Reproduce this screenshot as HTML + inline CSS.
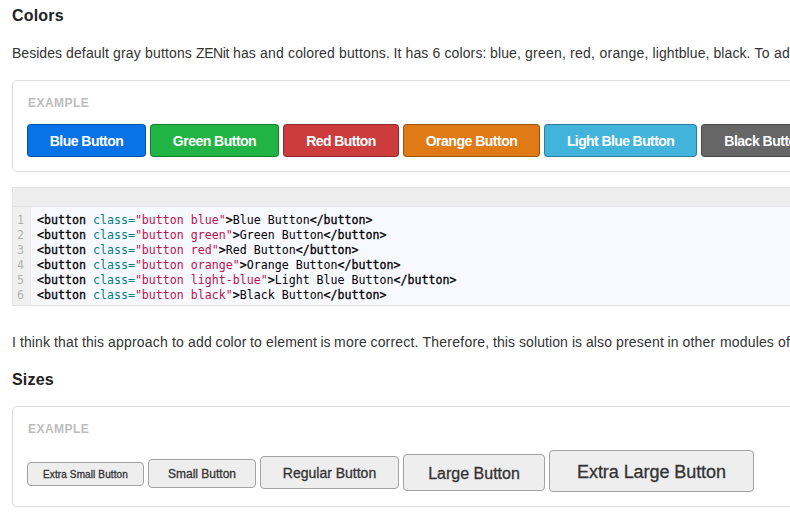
<!DOCTYPE html>
<html><head><meta charset="utf-8">
<style>
html,body{margin:0;padding:0;background:#fff;}
body{width:790px;height:513px;overflow:hidden;position:relative;font-family:"Liberation Sans",sans-serif;color:#333;font-size:14px;}
h2{position:absolute;margin:0;font-size:16px;font-weight:bold;color:#222;left:12px;white-space:nowrap;line-height:20px;letter-spacing:0.2px;}
p{position:absolute;margin:0;left:0;top:0;width:790px;height:20px;white-space:nowrap;font-size:14px;line-height:20px;color:#333;}
p span{position:absolute;top:0;white-space:nowrap;}
.box{position:absolute;left:12px;width:900px;border:1px solid #ddd;border-radius:5px;background:#fff;box-sizing:border-box;}
.ex{position:absolute;left:15px;font-size:12px;font-weight:bold;color:#bdbdbd;letter-spacing:0.45px;line-height:14px;}
.btn{position:absolute;box-sizing:border-box;border-radius:4px;color:#fff;font-weight:bold;font-size:14px;text-align:center;border:1px solid rgba(0,0,0,.3);white-space:nowrap;}
.g{background:#eee;border:1px solid #a2a2a2;color:#333;font-weight:normal;-webkit-text-stroke:0.3px #333;}
.code{position:absolute;left:12px;top:187px;width:900px;height:119px;background:#f8f8ff;border:1px solid #e3e3e3;box-sizing:border-box;}
.code .bar{position:absolute;left:0;top:0;right:0;height:18px;background:#eee;border-bottom:1px solid #e3e3e3;}
.code .gut{position:absolute;left:0;top:19px;width:17px;bottom:0;background:#f0f0f0;border-right:1px solid #e8e8e8;}
.ln{position:absolute;left:12px;width:12px;text-align:right;font-family:"DejaVu Sans Mono","Liberation Mono",monospace;font-size:11.627px;color:#b0b0b0;line-height:15px;}
.cl{position:absolute;left:37px;font-family:"DejaVu Sans Mono","Liberation Mono",monospace;font-size:11.627px;line-height:15px;color:#000;white-space:pre;}
.cl b{font-weight:normal;color:#000;-webkit-text-stroke:0.3px #000;}
.cl .a{color:#008080;}
.cl .s{color:#b8144c;}
</style></head><body>
<h2 style="top:6px">Colors</h2>
<p style="top:43px"><span style="left:12px;letter-spacing:0.028px">Besides </span><span style="left:66px;letter-spacing:0.138px">default </span><span style="left:113px;letter-spacing:0.191px">gray </span><span style="left:145px;letter-spacing:0.154px">buttons </span><span style="left:196px;letter-spacing:-0.400px">ZENit </span><span style="left:233px;letter-spacing:0.143px">has </span><span style="left:260px;letter-spacing:0.214px">and </span><span style="left:288px;letter-spacing:0.155px">colored </span><span style="left:339px;letter-spacing:0.148px">buttons. </span><span style="left:393.5px;letter-spacing:0.110px">It </span><span style="left:405.5px;letter-spacing:0.143px">has </span><span style="left:432.5px;letter-spacing:0.214px">6 </span><span style="left:444.5px;letter-spacing:0.109px">colors: </span><span style="left:490.0px;letter-spacing:0.128px">blue, </span><span style="left:525.0px;letter-spacing:0.217px">green, </span><span style="left:570.0px;letter-spacing:0.219px">red, </span><span style="left:599.5px;letter-spacing:0.217px">orange, </span><span style="left:652.5px;letter-spacing:0.096px">lightblue, </span><span style="left:713.5px;letter-spacing:0.071px">black. </span><span style="left:754.5px;letter-spacing:0.331px">To </span><span style="left:774.0px;letter-spacing:0.214px">add </span></p>
<div class="box" style="top:80px;height:92px;">
 <div class="ex" style="top:15px">EXAMPLE</div>
</div>
<div class="btn" style="left:27px;top:124px;width:119px;height:33px;line-height:32px;background:#0873e6;letter-spacing:-0.53px;">Blue Button</div>
<div class="btn" style="left:150px;top:124px;width:129px;height:33px;line-height:32px;background:#1fb443;letter-spacing:-0.51px;">Green Button</div>
<div class="btn" style="left:283px;top:124px;width:116px;height:33px;line-height:32px;background:#cc3c3c;letter-spacing:-0.6px;">Red Button</div>
<div class="btn" style="left:403px;top:124px;width:137px;height:33px;line-height:32px;background:#e07a14;letter-spacing:-0.49px;">Orange Button</div>
<div class="btn" style="left:544px;top:124px;width:153px;height:33px;line-height:32px;background:#42b4dc;letter-spacing:-0.6px;">Light Blue Button</div>
<div class="btn" style="left:701px;top:124px;width:127px;height:33px;line-height:32px;background:#666;letter-spacing:-0.5px;">Black Button</div>

<div class="code">
 <div class="bar"></div><div class="gut"></div>
</div>
<div class="ln" style="top:213px">1</div><div class="cl" style="top:213px"><b>&lt;button</b> <span class="a">class=</span><span class="s">"button blue"</span><b>&gt;</b>Blue Button<b>&lt;/button&gt;</b></div>
<div class="ln" style="top:228px">2</div><div class="cl" style="top:228px"><b>&lt;button</b> <span class="a">class=</span><span class="s">"button green"</span><b>&gt;</b>Green Button<b>&lt;/button&gt;</b></div>
<div class="ln" style="top:243px">3</div><div class="cl" style="top:243px"><b>&lt;button</b> <span class="a">class=</span><span class="s">"button red"</span><b>&gt;</b>Red Button<b>&lt;/button&gt;</b></div>
<div class="ln" style="top:258px">4</div><div class="cl" style="top:258px"><b>&lt;button</b> <span class="a">class=</span><span class="s">"button orange"</span><b>&gt;</b>Orange Button<b>&lt;/button&gt;</b></div>
<div class="ln" style="top:273px">5</div><div class="cl" style="top:273px"><b>&lt;button</b> <span class="a">class=</span><span class="s">"button light-blue"</span><b>&gt;</b>Light Blue Button<b>&lt;/button&gt;</b></div>
<div class="ln" style="top:288px">6</div><div class="cl" style="top:288px"><b>&lt;button</b> <span class="a">class=</span><span class="s">"button black"</span><b>&gt;</b>Black Button<b>&lt;/button&gt;</b></div>
<p style="top:332px"><span style="left:12px;letter-spacing:0.110px">I </span><span style="left:20px;letter-spacing:0.086px">think </span><span style="left:54px;letter-spacing:0.162px">that </span><span style="left:82px;letter-spacing:0.053px">this </span><span style="left:108px;letter-spacing:0.203px">approach </span><span style="left:172px;letter-spacing:0.162px">to </span><span style="left:188px;letter-spacing:0.214px">add </span><span style="left:215.5px;letter-spacing:0.131px">color </span><span style="left:250.0px;letter-spacing:0.162px">to </span><span style="left:266.0px;letter-spacing:0.170px">element </span><span style="left:320.5px;letter-spacing:-0.055px">is </span><span style="left:334.0px;letter-spacing:0.276px">more </span><span style="left:370.5px;letter-spacing:0.166px">correct. </span><span style="left:422.5px;letter-spacing:0.241px">Therefore, </span><span style="left:493.0px;letter-spacing:0.053px">this </span><span style="left:519.0px;letter-spacing:0.093px">solution </span><span style="left:572.0px;letter-spacing:-0.055px">is </span><span style="left:586.0px;letter-spacing:0.079px">also </span><span style="left:616.0px;letter-spacing:0.186px">present </span><span style="left:667.5px;letter-spacing:0.052px">in </span><span style="left:682.5px;letter-spacing:0.218px">other </span><span style="left:720.0px;letter-spacing:0.155px">modules </span><span style="left:778.0px;letter-spacing:0.162px">of </span><span style="left:794.0px;letter-spacing:0.018px">ZENit. </span></p>
<h2 style="top:370px">Sizes</h2>
<div class="box" style="top:406px;height:101px;">
 <div class="ex" style="top:15px">EXAMPLE</div>
</div>
<div class="btn g" style="left:27px;top:462px;width:117px;height:24px;line-height:24px;font-size:10px;letter-spacing:0.12px;">Extra Small Button</div>
<div class="btn g" style="left:148px;top:459px;width:108px;height:29px;line-height:29px;font-size:12px;">Small Button</div>
<div class="btn g" style="left:260px;top:456px;width:139px;height:33px;line-height:33px;font-size:14px;">Regular Button</div>
<div class="btn g" style="left:403px;top:454px;width:142px;height:37px;line-height:37px;font-size:16px;">Large Button</div>
<div class="btn g" style="left:549px;top:450px;width:205px;height:42px;line-height:42px;font-size:18px;letter-spacing:-0.07px;">Extra Large Button</div>
</body></html>
